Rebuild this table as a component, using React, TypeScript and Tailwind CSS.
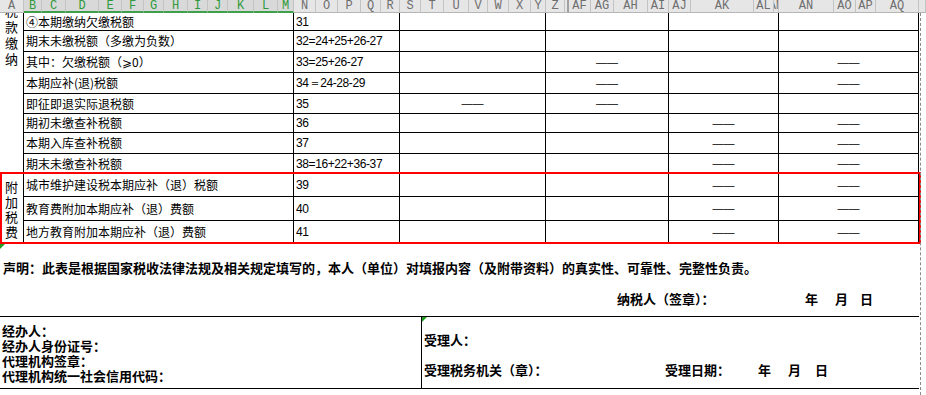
const cols: { l: string; w: string; sel?: boolean; hid?: boolean }[] = [
  { l: "A", w: "w-[24px]" },
  { l: "B", w: "w-[18px]", sel: true },
  { l: "C", w: "w-[24px]", sel: true },
  { l: "D", w: "w-[33px]", sel: true },
  { l: "E", w: "w-[23px]", sel: true },
  { l: "F", w: "w-[22px]", sel: true },
  { l: "G", w: "w-[20px]", sel: true },
  { l: "H", w: "w-[24px]", sel: true },
  { l: "I", w: "w-[20px]", sel: true },
  { l: "J", w: "w-[20px]", sel: true },
  { l: "K", w: "w-[26px]", sel: true },
  { l: "L", w: "w-[24px]", sel: true },
  { l: "M", w: "w-[16px]", sel: true },
  { l: "N", w: "w-[22px]" },
  { l: "O", w: "w-[22px]" },
  { l: "P", w: "w-[23px]" },
  { l: "Q", w: "w-[20px]" },
  { l: "R", w: "w-[19px]" },
  { l: "S", w: "w-[21px]" },
  { l: "T", w: "w-[23px]" },
  { l: "U", w: "w-[25px]" },
  { l: "V", w: "w-[19px]" },
  { l: "W", w: "w-[21px]" },
  { l: "X", w: "w-[22px]" },
  { l: "Y", w: "w-[15px]" },
  { l: "Z", w: "w-[19px]" },
  { l: "", w: "w-[4px]", hid: true },
  { l: "AF", w: "w-[22px]" },
  { l: "AG", w: "w-[23px]" },
  { l: "AH", w: "w-[34px]" },
  { l: "AI", w: "w-[21px]" },
  { l: "AJ", w: "w-[22px]" },
  { l: "AK", w: "w-[63px]" },
  { l: "AL", w: "w-[20px]" },
  { l: "AM", w: "w-[5px]" },
  { l: "AN", w: "w-[55px]" },
  { l: "AO", w: "w-[22px]" },
  { l: "AP", w: "w-[20px]" },
  { l: "AQ", w: "w-[43px]" },
  { l: "", w: "w-[7px]" },
];

type Row = { label: string; num: string; d: [boolean, boolean, boolean, boolean] };

const rows: Row[] = [
  { label: "④本期缴纳欠缴税额", num: "31", d: [false, false, false, false] },
  { label: "期末未缴税额（多缴为负数）", num: "32=24+25+26-27", d: [false, false, false, false] },
  { label: "其中：欠缴税额（⩾0）", num: "33=25+26-27", d: [false, true, false, true] },
  { label: "本期应补(退)税额", num: "34＝24-28-29", d: [false, true, false, true] },
  { label: "即征即退实际退税额", num: "35", d: [true, true, false, false] },
  { label: "期初未缴查补税额", num: "36", d: [false, false, true, true] },
  { label: "本期入库查补税额", num: "37", d: [false, false, true, true] },
  { label: "期末未缴查补税额", num: "38=16+22+36-37", d: [false, false, true, true] },
  { label: "城市维护建设税本期应补（退）税额", num: "39", d: [false, false, true, true] },
  { label: "教育费附加本期应补（退）费额", num: "40", d: [false, false, true, true] },
  { label: "地方教育附加本期应补（退）费额", num: "41", d: [false, false, true, true] },
];

function Dash({ show }: { show: boolean }) {
  return (
    <div className="border-r border-b border-black flex items-center justify-center">
      {show && (
        <span className="font-['Liberation_Sans',sans-serif] text-[11px] leading-none">——</span>
      )}
    </div>
  );
}

function Mark({ className }: { className: string }) {
  return (
    <svg className={className} width="5" height="5" viewBox="0 0 5 5">
      <polygon points="0,0 5,0 0,5" fill="#1e9e1e" />
    </svg>
  );
}

export default function App() {
  return (
    <div className="relative w-[926px] h-[395px] overflow-hidden bg-white text-black font-['Noto_Sans_CJK_SC',sans-serif]">
      {/* column header */}
      <div className="flex h-[13px] bg-[#e6e6e6] font-['Liberation_Mono',monospace] text-[12px] leading-none">
        {cols.map((c, i) => (
          <div
            key={i}
            className={`${c.w} h-[13px] shrink-0 flex items-center justify-center overflow-hidden ${
              c.hid ? "border-r-2 border-[#a0a0a0]" : "border-r border-[#c3c3c3]"
            } ${
              c.sel
                ? "text-[#2f9a3c] bg-[#d9d9d9] border-b-2 border-b-[#3fa04c]"
                : "text-[#6e6e6e] border-b border-b-[#b5b5b5]"
            }`}
          >
            {c.l}
          </div>
        ))}
      </div>

      {/* table */}
      <div className="grid w-[919px] grid-cols-[24px_270px_106px_146px_123px_110px_140px] grid-rows-[18px_21px_21px_21px_20px_19px_21px_20px_23px_24px_23px] text-[12px]">
        <div className="row-span-8 border-r border-b border-black overflow-hidden">
          <div className="mt-[-10px] flex flex-col items-center text-[13px] leading-[16px]">
            <span>税</span>
            <span>款</span>
            <span>缴</span>
            <span>纳</span>
          </div>
        </div>
        {rows.slice(0, 8).map((r, i) => (
          <RowCells key={i} r={r} />
        ))}
        <div className="row-span-3 border-r border-b border-black flex items-center justify-center">
          <div className="flex flex-col items-center text-[13px] leading-[15px]">
            <span>附</span>
            <span>加</span>
            <span>税</span>
            <span>费</span>
          </div>
        </div>
        {rows.slice(8).map((r, i) => (
          <RowCells key={i} r={r} />
        ))}
      </div>

      {/* declaration */}
      <div className="h-[48px] flex items-center pl-[3px] font-bold text-[13px] whitespace-nowrap">
        声明：此表是根据国家税收法律法规及相关规定填写的，本人（单位）对填报内容（及附带资料）的真实性、可靠性、完整性负责。
      </div>
      <div className="h-[24px] flex items-start font-bold text-[13px] leading-[14px] whitespace-nowrap">
        <span className="ml-[617px] w-[188px]">纳税人（签章）：</span>
        <span className="w-[30px]">年</span>
        <span className="w-[25px]">月</span>
        <span>日</span>
      </div>

      {/* signature box */}
      <div className="w-[919px] h-[73px] border-t border-b border-black flex font-bold text-[13px] whitespace-nowrap">
        <div className="w-[422px] border-r border-black flex flex-col justify-center pl-[2px] leading-[15px]">
          <span>经办人：</span>
          <span>经办人身份证号：</span>
          <span>代理机构签章：</span>
          <span>代理机构统一社会信用代码：</span>
        </div>
        <div className="flex-1 flex flex-col pt-[16px] pl-[2px] gap-[16px] leading-[14px]">
          <span>受理人：</span>
          <div className="flex">
            <span className="w-[241px]">受理税务机关（章）：</span>
            <span className="w-[93px]">受理日期：</span>
            <span className="w-[30px]">年</span>
            <span className="w-[27px]">月</span>
            <span>日</span>
          </div>
        </div>
      </div>

      {/* overlays */}
      <div className="absolute left-0 top-[172px] w-[921px] h-[72px] border-2 border-[#ff0000] pointer-events-none" />
      <div className="absolute left-[920px] top-[13px] h-[382px] border-l border-dashed border-[#8a8a8a]" />
      <Mark className="absolute left-0 top-[244px]" />
      <Mark className="absolute left-[422px] top-[317px]" />
    </div>
  );
}

function RowCells({ r }: { r: Row }) {
  return (
    <>
      <div className="border-r border-b border-black flex items-center pl-[2px] whitespace-nowrap overflow-hidden leading-none">
        {r.label}
      </div>
      <div className="border-r border-b border-black flex items-center pl-[2px] whitespace-nowrap overflow-hidden leading-none font-['Liberation_Sans',sans-serif] tracking-[-0.4px]">
        {r.num}
      </div>
      <Dash show={r.d[0]} />
      <Dash show={r.d[1]} />
      <Dash show={r.d[2]} />
      <Dash show={r.d[3]} />
    </>
  );
}
